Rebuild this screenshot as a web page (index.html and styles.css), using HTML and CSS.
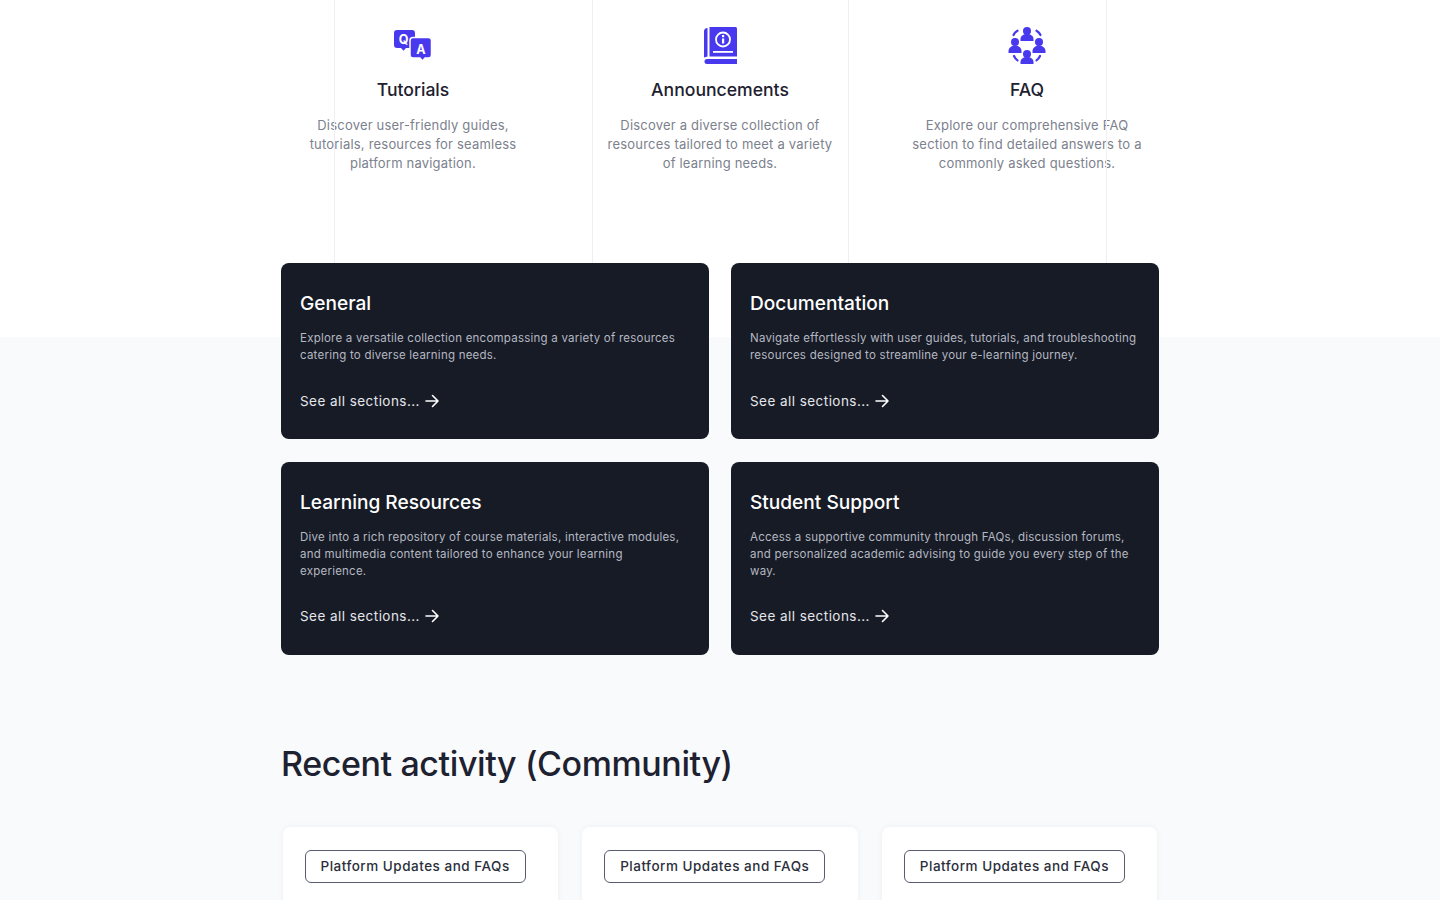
FILE: index.html
```html
<!DOCTYPE html>
<html lang="en">
<head>
<meta charset="utf-8">
<title>Help Center</title>
<link rel="stylesheet" href="styles.css">
</head>
<body>
<div class="page">
  <section class="hero">
    <div class="lines"><span></span><span></span><span></span><span></span></div>
    <div class="features">
      <article class="feature">
        <svg class="icon" viewBox="0 0 38 38" width="38" height="38">
          <path fill="#4838ee" d="M3 4h15a3 3 0 0 1 3 3v12a3 3 0 0 1-3 3h-6l-2.500 2.800L7 22H3a3 3 0 0 1-3-3V7a3 3 0 0 1 3-3z"/>
          <path fill="#4838ee" stroke="#fff" stroke-width="1.500" d="M19 11.500h15.500a3 3 0 0 1 3 3V29a3 3 0 0 1-3 3H31l-2.500 3-2.500-3h-7a3 3 0 0 1-3-3V14.500a3 3 0 0 1 3-3z"/>
          <text class="glyph" x="9.500" y="17.800">Q</text>
          <text class="glyph" x="27" y="27.500">A</text>
        </svg>
        <h3 class="feature-title">Tutorials</h3>
        <p class="feature-text">Discover user-friendly guides, tutorials, resources for seamless platform navigation.</p>
      </article>
      <article class="feature">
        <svg class="icon" viewBox="0 0 38 38" width="38" height="38">
          <path fill="#4838ee" d="M6.500 2v28.500L3 31.500V5.500A3.500 3.500 0 0 1 6.500 2z"/>
          <path fill="#4838ee" d="M8.500 1h26a1.500 1.500 0 0 1 1.500 1.500V30.500H8.500z"/>
          <path fill="#4838ee" d="M6 33h30v5H6a2.500 2.500 0 0 1 0-5z"/>
          <circle cx="22" cy="13.500" r="7" fill="none" stroke="#fff" stroke-width="1.800"/>
          <rect x="21" y="12.500" width="2.200" height="5" fill="#fff"/>
          <rect x="21" y="9" width="2.200" height="2.200" fill="#fff"/>
          <rect x="12" y="25" width="20" height="1.800" fill="#fff"/>
        </svg>
        <h3 class="feature-title">Announcements</h3>
        <p class="feature-text">Discover a diverse collection of resources tailored to meet a variety of learning needs.</p>
      </article>
      <article class="feature">
        <svg class="icon" viewBox="0 0 38 38" width="38" height="38">
          <g fill="#4838ee">
            <circle cx="19" cy="5" r="4"/><path d="M12.500 15v-2c0-3 2.800-5 6.500-5s6.500 2 6.500 5v2z"/>
            <circle cx="7" cy="16" r="4"/><path d="M.5 27v-2c0-3 2.800-5.500 6.500-5.500s6.500 2.500 6.500 5.500v2z"/>
            <circle cx="31" cy="16" r="4"/><path d="M24.500 27v-2c0-3 2.800-5.500 6.500-5.500s6.500 2.500 6.500 5.500v2z"/>
            <circle cx="19" cy="28" r="4"/><path d="M12.500 38v-2c0-3 2.800-5 6.500-5s6.500 2 6.500 5v2z"/>
          </g>
          <g fill="none" stroke="#4838ee" stroke-width="2.200" stroke-linecap="round">
            <path d="M5.500 9c.8-1.800 2.200-3.300 4-4.300"/><path d="M28.500 4.700c1.800 1 3.200 2.500 4 4.300"/>
            <path d="M6 30c.8 1.800 2 3.300 3.500 4.300"/><path d="M28.500 34.300c1.500-1 2.700-2.500 3.500-4.300"/>
          </g>
        </svg>
        <h3 class="feature-title">FAQ</h3>
        <p class="feature-text">Explore our comprehensive FAQ section to find detailed answers to a commonly asked questions.</p>
      </article>
    </div>
  </section>
  <main class="main">
    <section class="topics">
      <article class="topic">
        <h2 class="topic-title">General</h2>
        <p class="topic-text">Explore a versatile collection encompassing a variety of resources catering to diverse learning needs.</p>
        <a class="topic-link">See all sections...
          <svg class="arrow" viewBox="0 0 16 16" width="16" height="16"><path d="M2 8h12M8.500 2.500 14 8l-5.500 5.500"/></svg></a>
      </article>
      <article class="topic">
        <h2 class="topic-title">Documentation</h2>
        <p class="topic-text">Navigate effortlessly with user guides, tutorials, and troubleshooting resources designed to streamline your e-learning journey.</p>
        <a class="topic-link">See all sections...
          <svg class="arrow" viewBox="0 0 16 16" width="16" height="16"><path d="M2 8h12M8.500 2.500 14 8l-5.500 5.500"/></svg></a>
      </article>
      <article class="topic">
        <h2 class="topic-title">Learning Resources</h2>
        <p class="topic-text">Dive into a rich repository of course materials, interactive modules, and multimedia content tailored to enhance your learning experience.</p>
        <a class="topic-link">See all sections...
          <svg class="arrow" viewBox="0 0 16 16" width="16" height="16"><path d="M2 8h12M8.500 2.500 14 8l-5.500 5.500"/></svg></a>
      </article>
      <article class="topic">
        <h2 class="topic-title">Student Support</h2>
        <p class="topic-text">Access a supportive community through FAQs, discussion forums, and personalized academic advising to guide you every step of the way.</p>
        <a class="topic-link">See all sections...
          <svg class="arrow" viewBox="0 0 16 16" width="16" height="16"><path d="M2 8h12M8.500 2.500 14 8l-5.500 5.500"/></svg></a>
      </article>
    </section>
    <h2 class="activity-title">Recent activity (Community)</h2>
    <section class="activity">
      <article class="post"><span class="tag">Platform Updates and FAQs</span></article>
      <article class="post"><span class="tag">Platform Updates and FAQs</span></article>
      <article class="post"><span class="tag">Platform Updates and FAQs</span></article>
    </section>
  </main>
</div>
</body>
</html>
```
FILE: styles.css
```css
* { box-sizing: border-box; }
html, body { margin: 0; height: 900px; overflow: hidden; }
body { font-family: Inter, "Liberation Sans", sans-serif; background: #f9fafb; color: #171b26; }
.page { display: flex; flex-direction: column; }

.hero { position: relative; height: 337px; background: #fff; padding-top: 26px; }
.lines { position: absolute; top: 0; left: 334px; height: 263px; display: grid; grid-template-columns: 258px 256px 258px 1px; pointer-events: none; }
.lines span { width: 1px; background: #eff0f3; }
.features { width: 878px; margin: 0 auto; display: grid; grid-template-columns: repeat(3, 264px); column-gap: 43px; }
.feature { display: flex; flex-direction: column; align-items: center; text-align: center; }
.icon { display: block; }
.glyph { fill: #fff; font: 700 12.500px Inter, sans-serif; text-anchor: middle; }
.feature-title { margin: 15px 0 0; font-size: 17.600px; line-height: 22px; font-weight: 450; color: #1d2130; }
.feature-text { margin: 15px 0 0; width: 240px; font-size: 13px; line-height: 19px; letter-spacing: .2px; color: #7c818d; }

.main { width: 878px; margin: -74px auto 0; position: relative; }
.topics { display: grid; grid-template-columns: 428px 428px; gap: 22.600px 22px; }
.topic { background: #171b26; border-radius: 8px; padding: 28px 19px 28.800px; color: #fff; display: flex; flex-direction: column; }
.topic-title { margin: 0; font-size: 19.100px; line-height: 25px; font-weight: 450; }
.topic-text { margin: 14px 0 0; font-size: 11.500px; line-height: 16.800px; letter-spacing: .23px; color: #b4b8c1; }
.topic-link { margin-top: 27px; display: flex; align-items: center; gap: 4px; font-size: 13.500px; line-height: 20px; letter-spacing: .45px; color: #e5e6ea; }
.arrow { fill: none; stroke: #fff; stroke-width: 1.600; stroke-linecap: round; stroke-linejoin: round; }

.activity-title { margin: 85.800px 0 0; font-size: 34px; line-height: 46px; font-weight: 450; letter-spacing: -.4px; color: #1d2130; }
.activity { margin-top: 40px; padding: 0 1.500px; display: grid; grid-template-columns: repeat(3, 275.670px); gap: 24px; }
.post { background: #fff; border-radius: 8px; height: 200px; padding: 23px 22px; box-shadow: 0 0 6px rgba(23, 27, 38, .05); }
.tag { display: inline-block; padding: 6px 15px; border: 1px solid #585c6c; border-radius: 6px; font-size: 13.500px; line-height: 19px; letter-spacing: .5px; font-weight: 450; color: #2b2f3c; }
```
